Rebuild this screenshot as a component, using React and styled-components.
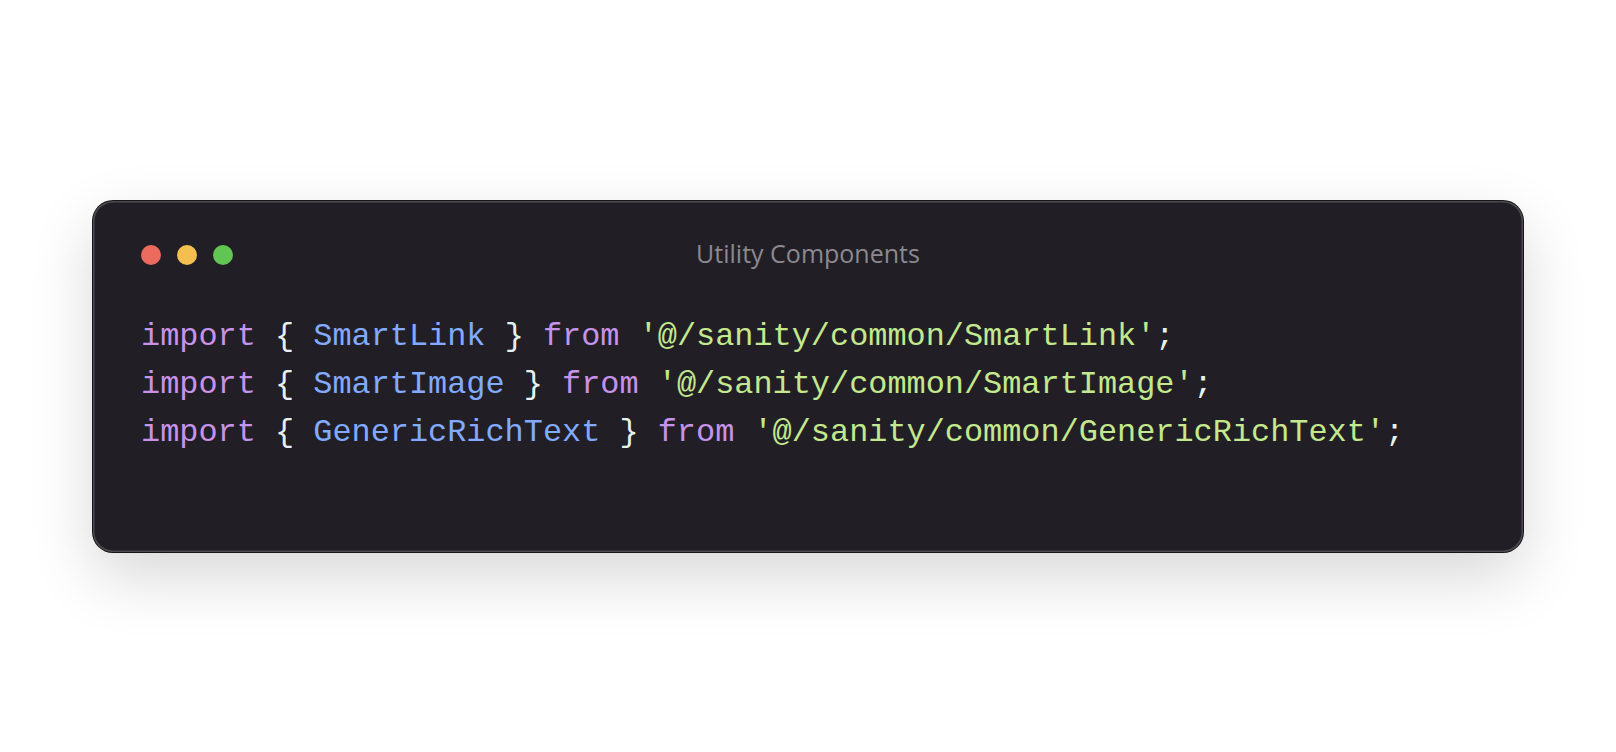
import { createGlobalStyle, styled } from "styled-components";

const GlobalStyle = createGlobalStyle`
  html, body {
    margin: 0;
    padding: 0;
    background: #ffffff;
  }
`;

const Page = styled.div`
  min-height: 100vh;
  display: flex;
  align-items: center;
  justify-content: center;
`;

const Window = styled.div`
  box-sizing: border-box;
  width: 1430px;
  height: 351px;
  padding: 44px 48px 0 48px;
  background: #211f25;
  border-radius: 20px;
  box-shadow:
    0 0 0 1px rgba(10, 9, 12, 0.95),
    inset 0 0 0 1.5px rgba(255, 255, 255, 0.2),
    0 24px 64px rgba(0, 0, 0, 0.16);
  display: flex;
  flex-direction: column;
  gap: 48px;
`;

const Header = styled.div`
  display: grid;
  grid-template-columns: 1fr auto 1fr;
  align-items: center;
  height: 20px;
`;

const Dots = styled.div`
  display: flex;
  gap: 16px;
`;

const Dot = styled.span`
  width: 20px;
  height: 20px;
  border-radius: 50%;
  background: ${(p) => p.$color};
`;

const Title = styled.div`
  font-family: "Open Sans", "Noto Sans", sans-serif;
  font-size: 25px;
  color: #8b898f;
  line-height: 20px;
  margin-top: -3px;
`;

const Code = styled.pre`
  margin: 0;
  font-family: "Liberation Mono", "DejaVu Sans Mono", monospace;
  font-size: 31.9px;
  line-height: 48px;
  color: #e6f2ef;
`;

const Tok = styled.span`
  color: ${(p) =>
    p.$kind === "kw"
      ? "#c792ea"
      : p.$kind === "name"
      ? "#82aaff"
      : p.$kind === "str"
      ? "#c3e88d"
      : "#e6f2ef"};
`;

const imports = [
  { name: "SmartLink", path: "@/sanity/common/SmartLink" },
  { name: "SmartImage", path: "@/sanity/common/SmartImage" },
  { name: "GenericRichText", path: "@/sanity/common/GenericRichText" },
];

export default function App() {
  return (
    <>
      <GlobalStyle />
      <Page>
        <Window>
          <Header>
            <Dots>
              <Dot $color="#ed6a5e" />
              <Dot $color="#f5bf4f" />
              <Dot $color="#61c554" />
            </Dots>
            <Title>Utility Components</Title>
            <span />
          </Header>
          <Code>
            {imports.map((imp) => (
              <div key={imp.name}>
                <Tok $kind="kw">import</Tok> {"{ "}
                <Tok $kind="name">{imp.name}</Tok>
                {" } "}
                <Tok $kind="kw">from</Tok> <Tok $kind="str">'{imp.path}'</Tok>;
              </div>
            ))}
          </Code>
        </Window>
      </Page>
    </>
  );
}
